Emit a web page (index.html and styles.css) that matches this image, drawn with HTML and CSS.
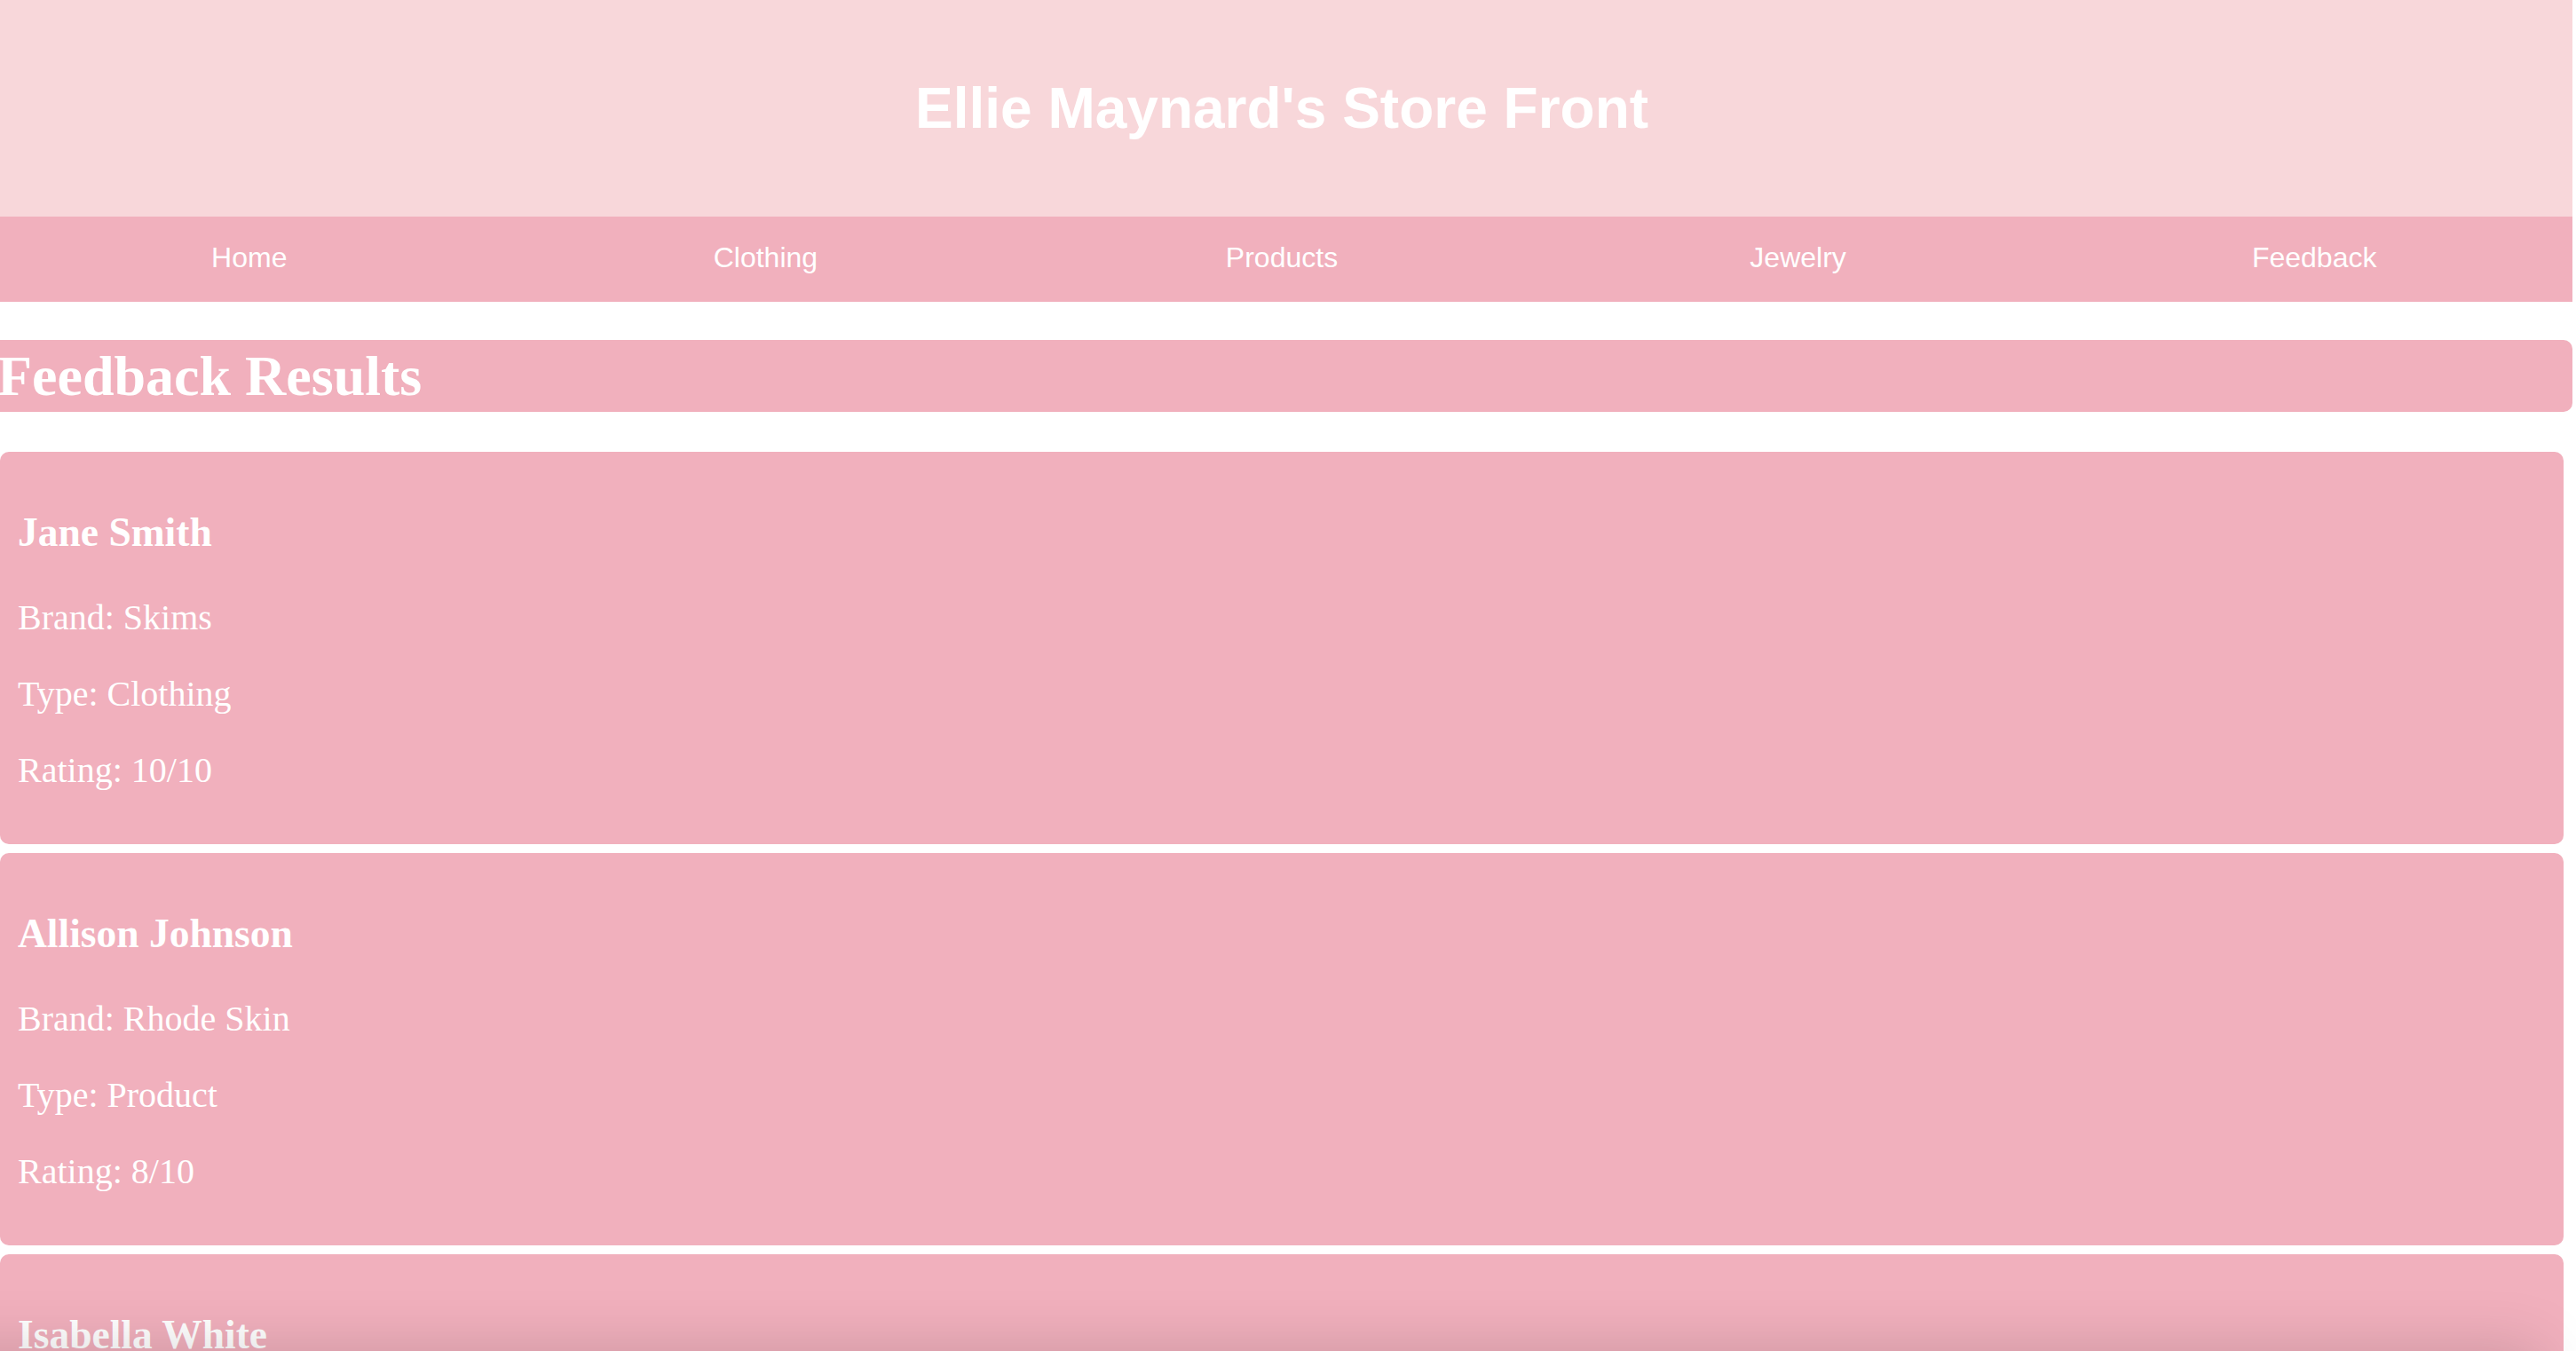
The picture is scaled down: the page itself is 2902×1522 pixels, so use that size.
FILE: index.html
```html
<!DOCTYPE html>
<html lang="en">
<head>
<meta charset="utf-8">
<title>Ellie Maynard's Store Front - Feedback</title>
<link rel="stylesheet" href="styles.css">
</head>
<body>
<div class="page">
  <header class="site-header">
    <h1 class="site-title">Ellie Maynard's Store Front</h1>
  </header>
  <nav class="site-nav">
    <a class="nav-link" href="#">Home</a>
    <a class="nav-link" href="#">Clothing</a>
    <a class="nav-link" href="#">Products</a>
    <a class="nav-link" href="#">Jewelry</a>
    <a class="nav-link" href="#">Feedback</a>
  </nav>
  <h1 class="section-title">Feedback Results</h1>
  <main class="results">
    <section class="card">
      <h2 class="card-name">Jane Smith</h2>
      <p class="card-line">Brand: Skims</p>
      <p class="card-line">Type: Clothing</p>
      <p class="card-line">Rating: 10/10</p>
    </section>
    <section class="card">
      <h2 class="card-name">Allison Johnson</h2>
      <p class="card-line">Brand: Rhode Skin</p>
      <p class="card-line">Type: Product</p>
      <p class="card-line">Rating: 8/10</p>
    </section>
    <section class="card">
      <h2 class="card-name">Isabella White</h2>
    </section>
  </main>
</div>
<div class="bottom-shade"></div>
</body>
</html>
```

FILE: styles.css
```css
html, body {
  margin: 0;
  padding: 0;
  background: #ffffff;
}

body {
  font-family: "Liberation Serif", "Times New Roman", serif;
  color: #ffffff;
  overflow: hidden;
}

.page {
  margin-left: -10px;
  width: 2908px;
}

.site-header {
  background: #f8d7da;
  padding: 85px 0;
  text-align: center;
}

.site-title {
  margin: 0;
  font-family: "Liberation Sans", Arial, sans-serif;
  font-weight: bold;
  font-size: 64px;
  line-height: 74px;
  color: #ffffff;
}

.site-nav {
  display: flex;
  background: #f1b0bd;
  height: 96px;
}

.nav-link {
  flex: 1;
  text-align: center;
  font-family: "Liberation Sans", Arial, sans-serif;
  font-size: 32px;
  line-height: 93px;
  color: #ffffff;
  text-decoration: none;
}

.section-title {
  margin: 43px 0 45px;
  padding: 4px 0 4px 7px;
  background: #f1b0bd;
  border-radius: 10px;
  font-size: 64px;
  font-weight: bold;
  line-height: 73px;
  color: #ffffff;
}

.results {
  display: flex;
  flex-direction: column;
  gap: 10px;
  margin: 0 10px;
}

.card {
  background: #f1b0bd;
  border-radius: 10px;
  padding: 20px;
}

.card-name {
  margin: 45px 0 47px;
  font-size: 45.5px;
  font-weight: bold;
  line-height: 52px;
  color: #ffffff;
}

.card-line {
  margin: 40px 0;
  font-size: 40px;
  line-height: 46px;
  color: #ffffff;
}

.bottom-shade {
  position: fixed;
  left: -100px;
  right: 40px;
  bottom: -120px;
  height: 120px;
  box-shadow: 0 0 70px rgba(0, 0, 0, 0.17);
  pointer-events: none;
}
```
